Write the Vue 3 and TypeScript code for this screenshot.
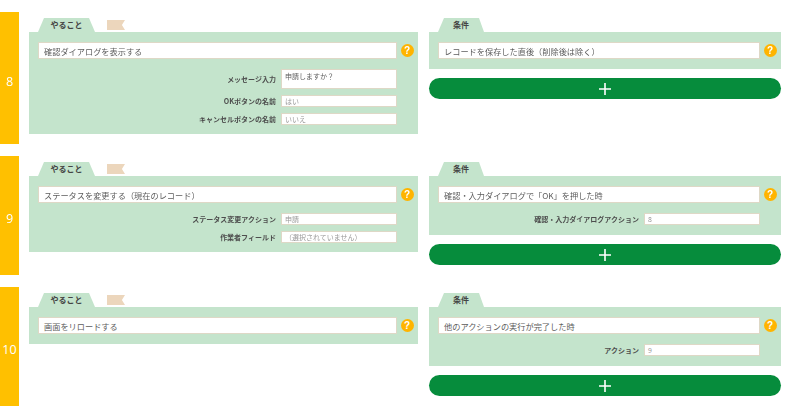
<script setup lang="ts">
interface Field {
  label: string
  value: string
  tall?: boolean
  dark?: boolean
}
interface Block {
  title: string
  fields: Field[]
}
interface Row {
  no: number
  task: Block
  condition: Block
}

const rows: Row[] = [
  {
    no: 8,
    task: {
      title: '確認ダイアログを表示する',
      fields: [
        { label: 'メッセージ入力', value: '申請しますか？', tall: true, dark: true },
        { label: 'OKボタンの名前', value: 'はい' },
        { label: 'キャンセルボタンの名前', value: 'いいえ' },
      ],
    },
    condition: { title: 'レコードを保存した直後（削除後は除く）', fields: [] },
  },
  {
    no: 9,
    task: {
      title: 'ステータスを変更する（現在のレコード）',
      fields: [
        { label: 'ステータス変更アクション', value: '申請' },
        { label: '作業者フィールド', value: '（選択されていません）' },
      ],
    },
    condition: {
      title: '確認・入力ダイアログで「OK」を押した時',
      fields: [{ label: '確認・入力ダイアログアクション', value: '8' }],
    },
  },
  {
    no: 10,
    task: { title: '画面をリロードする', fields: [] },
    condition: {
      title: '他のアクションの実行が完了した時',
      fields: [{ label: 'アクション', value: '9' }],
    },
  },
]
</script>

<template>
  <div class="page">
    <section v-for="row in rows" :key="row.no" class="row">
      <div class="bar">{{ row.no }}</div>

      <div class="column column-task">
        <div class="tabs">
          <div class="tab tab-task">やること</div>
          <div class="flag"></div>
        </div>
        <div class="panel" :class="{ 'panel-trim': row.task.fields.length }">
          <div class="main">
            <div class="title">{{ row.task.title }}</div>
            <span class="help">?</span>
          </div>
          <div v-if="row.task.fields.length" class="form">
            <div v-for="f in row.task.fields" :key="f.label" class="field">
              <span class="label">{{ f.label }}</span>
              <span class="value" :class="{ tall: f.tall, dark: f.dark }">{{ f.value }}</span>
            </div>
          </div>
        </div>
      </div>

      <div class="column column-condition">
        <div class="tabs">
          <div class="tab tab-condition">条件</div>
        </div>
        <div class="panel">
          <div class="main">
            <div class="title">{{ row.condition.title }}</div>
            <span class="help">?</span>
          </div>
          <div v-if="row.condition.fields.length" class="form">
            <div v-for="f in row.condition.fields" :key="f.label" class="field">
              <span class="label">{{ f.label }}</span>
              <span class="value">{{ f.value }}</span>
            </div>
          </div>
        </div>
        <button class="add" type="button" aria-label="追加">
          <svg width="12" height="12" viewBox="0 0 12 12">
            <path d="M6 0V12M0 6H12" stroke="#ffffff" stroke-width="1.6" fill="none" />
          </svg>
        </button>
      </div>
    </section>
  </div>
</template>

<style>
html,
body {
  margin: 0;
  background: #ffffff;
}
</style>

<style scoped>
.page {
  width: 800px;
  height: 406px;
  padding-top: 12px;
  box-sizing: border-box;
  display: flex;
  flex-direction: column;
  gap: 12px;
  overflow: hidden;
  font-family: "Noto Sans CJK JP", "Noto Sans", sans-serif;
  color: #555555;
  filter: blur(0.3px);
}
.row {
  display: flex;
  align-items: stretch;
}
.bar {
  width: 19px;
  flex: none;
  background: #ffc000;
  color: #ffffff;
  font-family: "Open Sans", sans-serif;
  font-size: 12.5px;
  display: flex;
  align-items: center;
  justify-content: center;
  padding-top: 6px;
  box-sizing: border-box;
}
.column {
  padding: 6px 0 10px;
  box-sizing: border-box;
}
.column-task {
  width: 389px;
  margin-left: 10px;
}
.column-condition {
  width: 352px;
  margin-left: 11px;
}
.tabs {
  height: 14px;
  display: flex;
  align-items: flex-start;
  padding-left: 9px;
}
.tab {
  height: 14px;
  background: #c4e4cc;
  color: #444444;
  font-size: 8px;
  font-weight: 700;
  line-height: 14px;
  text-align: center;
  box-sizing: border-box;
}
.tab-task {
  width: 57px;
  clip-path: polygon(6px 0, 51px 0, 57px 100%, 0 100%);
}
.tab-condition {
  width: 46px;
  clip-path: polygon(6px 0, 41px 0, 46px 100%, 0 100%);
}
.flag {
  width: 18px;
  height: 10px;
  margin: 2px 0 0 12px;
  background: #ecd6bc;
  clip-path: polygon(0 0, 100% 0, 83% 50%, 100% 100%, 0 100%);
}
.panel {
  background: #c4e4cc;
  padding: 10px 4px 10px 9px;
}
.panel-trim {
  padding-bottom: 9px;
}
.main {
  display: flex;
  align-items: center;
  gap: 4px;
}
.title {
  flex: 1;
  height: 17px;
  box-sizing: border-box;
  background: #ffffff;
  border: 1px solid #ded8c6;
  padding-left: 5px;
  font-size: 8.2px;
  line-height: 16px;
  color: #5c5c5c;
  white-space: nowrap;
}
.help {
  width: 13px;
  height: 13px;
  margin-left: -0.5px;
  margin-right: 0.5px;
  margin-top: -1px;
  border-radius: 50%;
  background: #ffb400;
  color: #ffffff;
  font-family: "Liberation Sans", sans-serif;
  font-size: 10px;
  font-weight: 700;
  line-height: 13px;
  text-align: center;
  flex: none;
}
.form {
  margin-top: 10px;
  padding-right: 17px;
  display: flex;
  flex-direction: column;
  gap: 6px;
}
.field {
  display: flex;
  justify-content: flex-end;
  align-items: center;
  gap: 5px;
}
.label {
  font-size: 7px;
  font-weight: 700;
  color: #4d4d4d;
  white-space: nowrap;
}
.value {
  width: 116px;
  height: 12px;
  box-sizing: border-box;
  background: #ffffff;
  border: 1px solid #ded8c6;
  padding-left: 3px;
  font-size: 7px;
  line-height: 10px;
  color: #999999;
  white-space: nowrap;
  flex: none;
}
.value.tall {
  height: 20px;
}
.value.dark {
  color: #5c5c5c;
  line-height: 13px;
}
.add {
  display: flex;
  align-items: center;
  justify-content: center;
  width: 100%;
  height: 21px;
  margin-top: 9px;
  padding: 0;
  border: none;
  border-radius: 11px;
  background: #068c3c;
}
</style>
